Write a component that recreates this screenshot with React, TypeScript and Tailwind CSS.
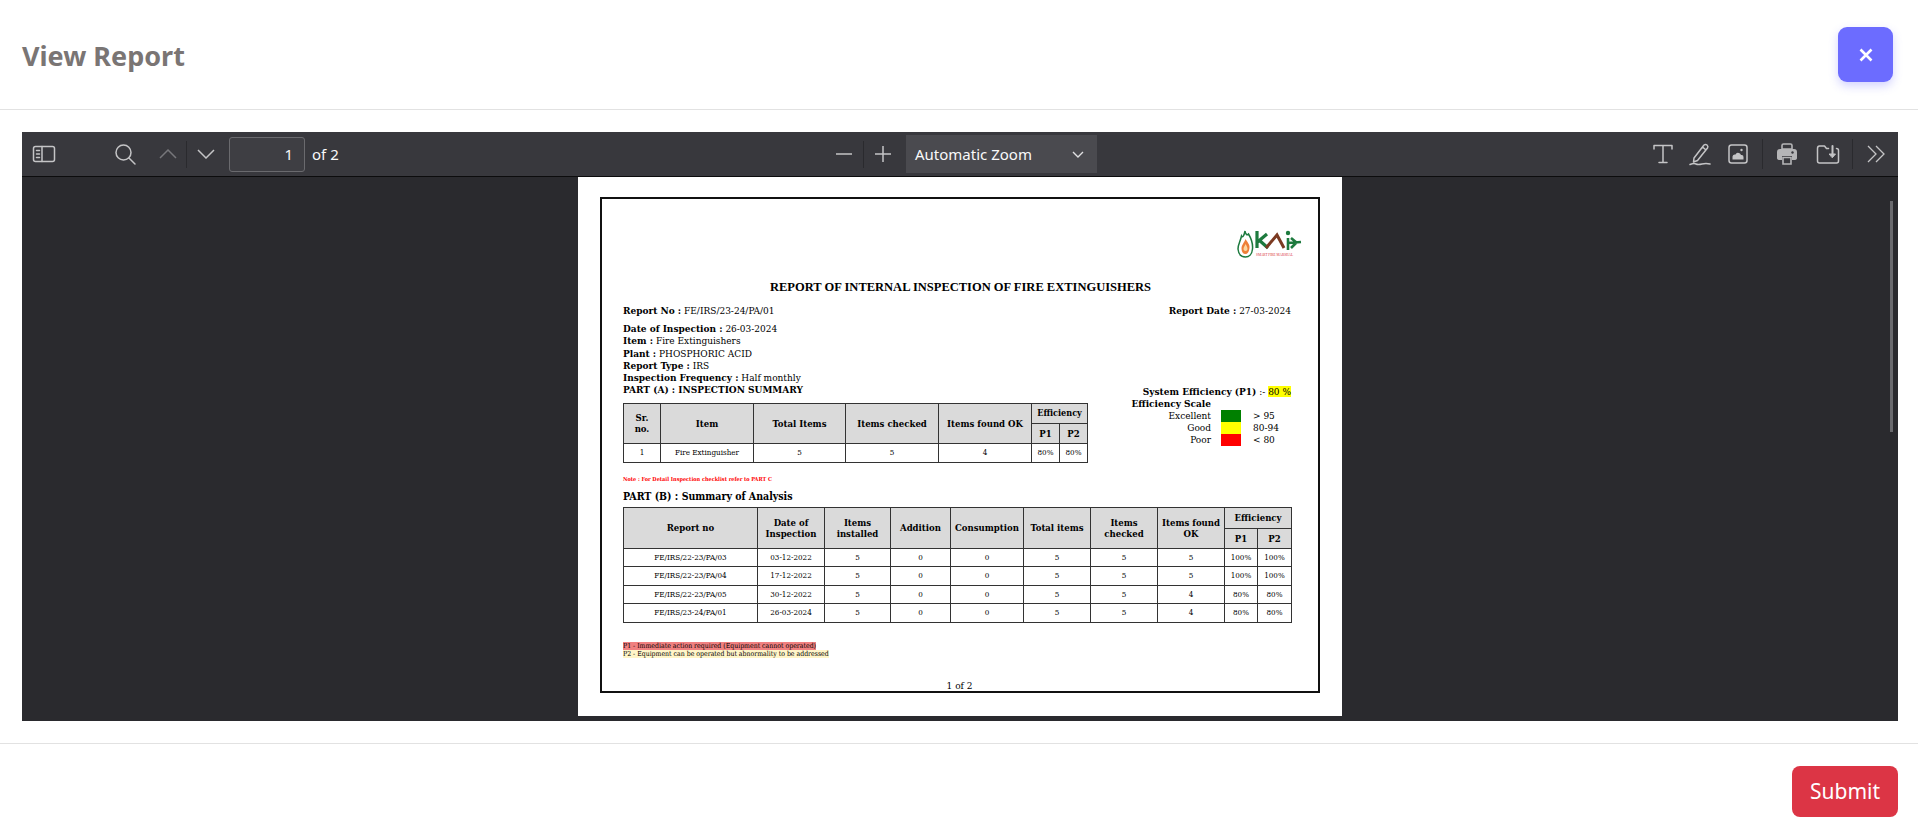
import { ReactNode } from "react";

const SERIF = "font-['DejaVu_Serif_Condensed','Liberation_Serif',serif]";

const SUMMARY_ROWS = [
  ["FE/IRS/22-23/PA/03", "03-12-2022", "5", "0", "0", "5", "5", "5", "100%", "100%"],
  ["FE/IRS/22-23/PA/04", "17-12-2022", "5", "0", "0", "5", "5", "5", "100%", "100%"],
  ["FE/IRS/22-23/PA/05", "30-12-2022", "5", "0", "0", "5", "5", "4", "80%", "80%"],
  ["FE/IRS/23-24/PA/01", "26-03-2024", "5", "0", "0", "5", "5", "4", "80%", "80%"],
];

const DETAILS = [
  ["Date of Inspection :", "26-03-2024"],
  ["Item :", "Fire Extinguishers"],
  ["Plant :", "PHOSPHORIC ACID"],
  ["Report Type :", "IRS"],
  ["Inspection Frequency :", "Half monthly"],
];

const SCALE = [
  { label: "Excellent", color: "bg-[#008000]", range: "> 95" },
  { label: "Good", color: "bg-[#ffff00]", range: "80-94" },
  { label: "Poor", color: "bg-[#ff0000]", range: "< 80" },
];

function ToolIcon({ children, className = "" }: { children: ReactNode; className?: string }) {
  return (
    <svg
      viewBox="0 0 24 24"
      fill="none"
      stroke="#c4c4c6"
      strokeWidth="1.5"
      strokeLinecap="round"
      strokeLinejoin="round"
      className={className}
    >
      {children}
    </svg>
  );
}

function Th({ children, className = "", ...rest }: { children: ReactNode; className?: string; colSpan?: number; rowSpan?: number }) {
  return (
    <th {...rest} className={`border border-[#333] bg-[#dadada] p-0 font-bold leading-[11px] ${className}`}>
      {children}
    </th>
  );
}

function Td({ children }: { children: ReactNode }) {
  return <td className="border border-[#333] p-0 text-center">{children}</td>;
}

function Logo() {
  return (
    <div className="flex justify-end">
      <svg viewBox="0 0 66 28" className="mr-[-12px] h-[28px] w-[66px]">
        {/* flame bulb */}
        <path d="M8 1 C8.5 4 10 6 11.5 4 C14.5 9 16 14 15.5 19 C15 24 12 27 8.5 27 C4.5 27 1.5 24 1 19 C1 14 3.5 11 4.5 6 C5.5 8 7 6 8 1Z" fill="none" stroke="#1d7a3e" strokeWidth="1.5" />
        <path d="M8.5 9 C10 12 13 14 12.5 18 C12 22 10.5 24 8.5 24 C6 24 4.5 22 4.5 18.5 C4.5 15 7 13 8.5 9Z" fill="#ee8038" />
        <path d="M8.5 14 C9.5 16 10.5 17 10.5 19 C10.5 21.5 6.5 21.5 6.5 19 C6.5 17 8 16 8.5 14Z" fill="#fbd7a0" />
        {/* k */}
        <path d="M20 1 V18 M20.5 12 L30 4 M22 10 L31 18" fill="none" stroke="#1d7a3e" strokeWidth="3.2" />
        {/* a */}
        <path d="M29 18 L40 5 L47 18" fill="none" stroke="#7b3a22" strokeWidth="3" />
        {/* i with branches */}
        <circle cx="51" cy="3" r="2.2" fill="#1d7a3e" />
        <path d="M51 8 V20 M51 13 L64 12 M54 8 L60 13 M54 18 L60 12" fill="none" stroke="#1d7a3e" strokeWidth="2.6" />
        <text x="19" y="26" fontSize="3.4" fill="#d8303a" fontFamily="Liberation Serif, serif">SMART FIRE MARSHAL</text>
      </svg>
    </div>
  );
}

function ReportPage() {
  return (
    <div className={`h-[539px] w-[764px] bg-white px-[22px] pt-[20px] text-black ${SERIF}`}>
      <div className="flex h-[496px] flex-col border-2 border-[#111] pl-[21px] pr-[27px] pt-[31px] text-[10px] leading-[12px]">
        <Logo />
        <h1 className="mt-[21px] pl-[7px] text-center font-['Liberation_Serif',serif] text-[12.5px] font-bold leading-[16px]">
          REPORT OF INTERNAL INSPECTION OF FIRE EXTINGUISHERS
        </h1>
        <div className="mt-[10px] flex justify-between">
          <p><b>Report No :</b> FE/IRS/23-24/PA/01</p>
          <p><b>Report Date :</b> 27-03-2024</p>
        </div>
        <div className="mt-[6px] leading-[12.3px]">
          {DETAILS.map(([label, value]) => (
            <p key={label}><b>{label}</b> {value}</p>
          ))}
          <p className="font-bold">PART (A) : INSPECTION SUMMARY</p>
        </div>
        <div className="mt-[6px] flex items-start justify-between">
          <table className="w-[464px] table-fixed border-collapse text-center text-[9.5px]">
            <colgroup>
              <col className="w-[37px]" />
              <col className="w-[93px]" />
              <col className="w-[92px]" />
              <col className="w-[93px]" />
              <col className="w-[93px]" />
              <col className="w-[28px]" />
              <col className="w-[28px]" />
            </colgroup>
            <thead>
              <tr className="h-[20px]">
                <Th rowSpan={2}>Sr.<br />no.</Th>
                <Th rowSpan={2}>Item</Th>
                <Th rowSpan={2}>Total Items</Th>
                <Th rowSpan={2}>Items checked</Th>
                <Th rowSpan={2}>Items found OK</Th>
                <Th colSpan={2} className="text-[9px]">Efficiency</Th>
              </tr>
              <tr className="h-[20px]">
                <Th>P1</Th>
                <Th>P2</Th>
              </tr>
            </thead>
            <tbody className="text-[8px]">
              <tr className="h-[19px]">
                <Td>1</Td>
                <Td>Fire Extinguisher</Td>
                <Td>5</Td>
                <Td>5</Td>
                <Td>4</Td>
                <Td>80%</Td>
                <Td>80%</Td>
              </tr>
            </tbody>
          </table>
          <div className="mt-[-17px] w-[160px]">
            <p className="text-right"><b>System Efficiency (P1)</b> :- <span className="bg-[#ffff00]">80 %</span></p>
            <div className="flex w-[80px] justify-end whitespace-nowrap font-bold">Efficiency Scale</div>
            {SCALE.map((row) => (
              <div key={row.label} className="flex">
                <span className="w-[80px] text-right">{row.label}</span>
                <span className={`ml-[10px] w-[20px] ${row.color}`} />
                <span className="ml-[12px]">{row.range}</span>
              </div>
            ))}
          </div>
        </div>
        <p className="mt-[12px] text-[5.5px] font-bold leading-[8px] text-[#ff0000]">Note : For Detail Inspection checklist refer to PART C</p>
        <p className="mt-[6px] text-[10.5px] font-bold leading-[14px]">PART (B) : Summary of Analysis</p>
        <table className="mt-[4px] w-[668px] table-fixed border-collapse text-center text-[9.5px]">
          <colgroup>
            <col className="w-[134px]" />
            <col className="w-[67px]" />
            <col className="w-[66px]" />
            <col className="w-[60px]" />
            <col className="w-[73px]" />
            <col className="w-[67px]" />
            <col className="w-[67px]" />
            <col className="w-[67px]" />
            <col className="w-[33px]" />
            <col className="w-[34px]" />
          </colgroup>
          <thead>
            <tr className="h-[21px]">
              <Th rowSpan={2}>Report no</Th>
              <Th rowSpan={2}>Date of<br />Inspection</Th>
              <Th rowSpan={2}>Items<br />installed</Th>
              <Th rowSpan={2}>Addition</Th>
              <Th rowSpan={2}>Consumption</Th>
              <Th rowSpan={2}>Total items</Th>
              <Th rowSpan={2}>Items<br />checked</Th>
              <Th rowSpan={2}>Items found<br />OK</Th>
              <Th colSpan={2}>Efficiency</Th>
            </tr>
            <tr className="h-[20px]">
              <Th>P1</Th>
              <Th>P2</Th>
            </tr>
          </thead>
          <tbody className="text-[8px]">
            {SUMMARY_ROWS.map((row) => (
              <tr key={row[0]} className="h-[18.5px]">
                {row.map((cell, i) => (
                  <Td key={i}>{cell}</Td>
                ))}
              </tr>
            ))}
          </tbody>
        </table>
        <div className="mt-[19px] text-[6.9px] leading-[8px]">
          <p><span className="bg-[#f08080]">P1 - Immediate action required (Equipment cannot operated)</span></p>
          <p><span className="bg-[#fff5c8]">P2 - Equipment can be operated but abnormality to be addressed</span></p>
        </div>
        <p className="mt-[22px] pl-[5px] text-center text-[10px]">1 of 2</p>
      </div>
    </div>
  );
}

function Toolbar() {
  return (
    <div className="flex h-[45px] shrink-0 items-center border-b border-[#0c0c0d] bg-[#38383d] font-['Noto_Sans',sans-serif] text-[15px] text-[#f9f9fa]">
      <div className="flex w-[813px] shrink-0 items-center">
        <ToolIcon className="ml-[10px] h-[24px] w-[24px]">
          <rect x="1.5" y="4.5" width="21" height="15" rx="2" />
          <path d="M10 4.5 V19.5 M4.5 8.5 H7.5 M4.5 12 H7.5 M4.5 15.5 H7.5" />
        </ToolIcon>
        <ToolIcon className="ml-[57px] h-[24px] w-[24px]">
          <circle cx="10.5" cy="10.5" r="7.5" />
          <path d="M16 16 L22 22" />
        </ToolIcon>
        <svg viewBox="0 0 18 10" fill="none" stroke="#77777b" strokeWidth="1.5" className="ml-[22px] h-[10px] w-[18px]">
          <path d="M1 9 L9 1 L17 9" />
        </svg>
        <span className="ml-[9px] h-[27px] w-px bg-[#2a2a2e]" />
        <svg viewBox="0 0 18 10" fill="none" stroke="#c4c4c6" strokeWidth="1.5" className="ml-[10px] h-[10px] w-[18px]">
          <path d="M1 1 L9 9 L17 1" />
        </svg>
        <div className="ml-[14px] flex h-[35px] w-[76px] items-center justify-end rounded-[3px] border border-[#6a6a6e] bg-[#3e3e43] pr-[11px]">1</div>
        <span className="ml-[7px]">of 2</span>
      </div>
      <div className="flex items-center">
        <svg viewBox="0 0 18 18" fill="none" stroke="#c4c4c6" strokeWidth="1.5" className="h-[18px] w-[18px]">
          <path d="M1 9 H17" />
        </svg>
        <span className="ml-[10px] h-[27px] w-px bg-[#2a2a2e]" />
        <svg viewBox="0 0 18 18" fill="none" stroke="#c4c4c6" strokeWidth="1.5" className="ml-[10px] h-[18px] w-[18px]">
          <path d="M1 9 H17 M9 1 V17" />
        </svg>
        <div className="ml-[14px] flex h-[38px] w-[191px] items-center justify-between bg-[#4a4a4f] pl-[9px] pr-[13px]">
          <span>Automatic Zoom</span>
          <svg viewBox="0 0 12 7" fill="none" stroke="#e0e0e2" strokeWidth="1.4" className="h-[7px] w-[12px]">
            <path d="M1 1 L6 6 L11 1" />
          </svg>
        </div>
      </div>
      <div className="ml-auto flex items-center pr-[13px]">
        <ToolIcon className="h-[24px] w-[24px]">
          <path d="M3 7 V3.5 H21 V7 M12 3.5 V20.5 M8 20.5 H16" />
        </ToolIcon>
        <ToolIcon className="ml-[13px] h-[24px] w-[24px]">
          <path d="M6 16 L16 3 Q17.5 2 19 3 Q20.5 4.5 19.5 6 L9.5 18.5 L5.5 20 Z M14.5 5 L18 8" />
          <path d="M2 22.5 Q6 21 8 22 T14 22 T22 22" />
        </ToolIcon>
        <ToolIcon className="ml-[14px] h-[24px] w-[24px]">
          <rect x="3" y="3" width="18" height="18" rx="2.5" />
          <path d="M6.5 17.5 V14.5 Q7 12 9.5 12.5 Q10.5 10 13 11 Q14.5 11.5 15 13 Q17.5 12.5 17.5 15 V17.5 Z" fill="#c4c4c6" stroke="none" />
          <circle cx="15.5" cy="8" r="1.2" fill="#c4c4c6" stroke="none" />
        </ToolIcon>
        <span className="ml-[12px] h-[30px] w-px bg-[#2a2a2e]" />
        <svg viewBox="0 0 20 22" className="ml-[14px] h-[22px] w-[20px]">
          <path d="M5 6 V2.5 Q5 1 6.5 1 H13.5 Q15 1 15 2.5 V6 Z" fill="none" stroke="#b5b5b7" strokeWidth="1.6" />
          <path d="M3 6 H17 Q20 6 20 9 V15 Q20 17 17 17 H15 V13 H5 V17 H3 Q0 17 0 15 V9 Q0 6 3 6 Z" fill="#b5b5b7" />
          <path d="M6 14.5 H14 V21 H6 Z" fill="none" stroke="#b5b5b7" strokeWidth="1.6" />
          <circle cx="15.5" cy="9.5" r="1.2" fill="#38383d" />
        </svg>
        <ToolIcon className="ml-[19px] h-[24px] w-[24px]">
          <path d="M12.5 6.5 H10.5 L8.5 4 H3.5 Q1.5 4 1.5 6.5 V19 Q1.5 21 3.5 21 H20.5 Q22.5 21 22.5 19 V8.5 Q22.5 6.5 20.5 6.5" />
          <path d="M16.5 4 V12" strokeWidth="2" />
          <path d="M13.5 12 H19.5 L16.5 15.5 Z" fill="#c4c4c6" strokeWidth="1" />
        </ToolIcon>
        <span className="ml-[12px] h-[30px] w-px bg-[#2a2a2e]" />
        <svg viewBox="0 0 18 18" fill="none" stroke="#c4c4c6" strokeWidth="1.3" className="ml-[14px] h-[18px] w-[18px]">
          <path d="M1 1 L9 9 L1 17 M9 1 L17 9 L9 17" />
        </svg>
      </div>
    </div>
  );
}

export default function App() {
  return (
    <div className="flex h-[838px] w-full flex-col bg-white font-['Noto_Sans',sans-serif]">
      <header className="flex h-[110px] shrink-0 items-center justify-between border-b border-[#e2e2e2] pl-[22px] pr-[25px]">
        <h2 className="pt-[3px] text-[27px] font-bold text-[#7a7574]">View Report</h2>
        <button className="flex h-[55px] w-[55px] items-center justify-center rounded-[9px] bg-[#6c6cff] shadow-[0_4px_10px_rgba(108,108,255,0.3)]">
          <svg viewBox="0 0 14 14" fill="none" stroke="white" strokeWidth="2.6" className="h-[14px] w-[14px]">
            <path d="M1.5 1.5 L12.5 12.5 M12.5 1.5 L1.5 12.5" />
          </svg>
        </button>
      </header>
      <main className="pl-[22px] pr-[20px] pt-[22px]">
        <div className="flex h-[589px] flex-col bg-[#2a2a2e]">
          <Toolbar />
          <div className="relative flex flex-1 justify-center">
            <ReportPage />
            <div className="absolute right-[5px] top-[24px] h-[231px] w-[3px] bg-[#6a6a6e]" />
          </div>
        </div>
      </main>
      <footer className="mt-[22px] flex flex-1 items-start justify-end border-t border-[#e2e2e2] pr-[20px] pt-[22px]">
        <button className="flex h-[51px] w-[106px] items-center justify-center rounded-[8px] bg-[#dc3545] text-[21px] text-white">Submit</button>
      </footer>
    </div>
  );
}
